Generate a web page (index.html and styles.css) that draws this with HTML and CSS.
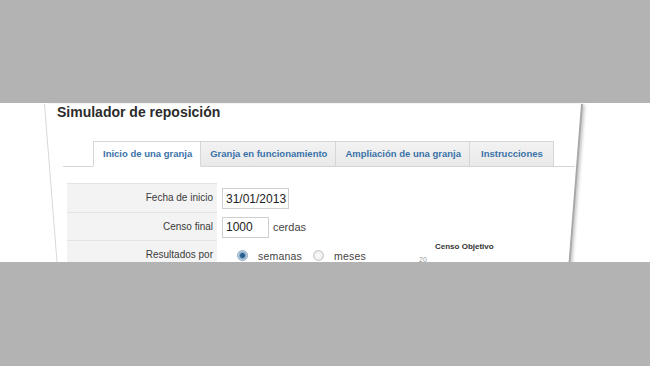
FILE: index.html
```html
<!DOCTYPE html>
<html lang="es">
<head>
    <meta charset="UTF-8">
    <meta name="viewport" content="width=device-width, initial-scale=1.0">
    <title>Simulador de reposición</title>
    <link rel="stylesheet" href="styles.css">
</head>
<body>
    <div class="band">
        <div class="sheet">
            <h1 class="title">Simulador de reposición</h1>

            <div class="tabs">
                <div class="tab active">Inicio de una granja</div>
                <div class="tab">Granja en funcionamiento</div>
                <div class="tab">Ampliación de una granja</div>
                <div class="tab last">Instrucciones</div>
            </div>

            <div class="form">
                <div class="fields">
                    <div class="label">Fecha de inicio</div>
                    <div class="value"><input class="field date" type="text" value="31/01/2013"></div>

                    <div class="label">Censo final</div>
                    <div class="value"><input class="field num" type="text" value="1000"><span class="unit">cerdas</span></div>

                    <div class="label">Resultados por</div>
                    <div class="value">
                        <span class="radio checked"></span><span class="opt">semanas</span>
                        <span class="radio"></span><span class="opt">meses</span>
                    </div>
                </div>

                <div class="chart">
                    <div class="chart-title">Censo Objetivo</div>
                    <div class="axis"><span class="tick">20</span><span class="grid-line"></span></div>
                </div>
            </div>
        </div>
    </div>
</body>
</html>
```

FILE: styles.css
```css
body {
    margin: 0;
    background: #b3b3b3;
    font-family: "Liberation Sans", Arial, sans-serif;
    color: #333;
}
.band {
    margin-top: 103px;
    height: 159px;
    background: #fff;
    overflow: hidden;
}
.sheet {
    position: relative;
    margin-left: 44px;
    width: 538px;
    height: 100%;
}
/* page edge, tilted back a little */
.sheet::before {
    content: "";
    position: absolute;
    top: 0;
    left: 0;
    width: 536px;
    height: 172px;
    border-left: 1px solid #d8d8d8;
    border-right: 2px solid #a9a9a9;
    box-shadow: 3px 0 3px -1px rgba(0,0,0,0.22);
    transform-origin: 50% 0;
    transform: perspective(600px) rotateX(-10deg);
}
.title {
    margin: 1px 0 0 13px;
    font-size: 14px;
    line-height: 17px;
    font-weight: bold;
    color: #2b2b2b;
}
.tabs {
    display: flex;
    margin: 20px 0 0 19px;
    width: 482px;
    padding-left: 30px;
    border-bottom: 1px solid #d6d6d6;
}
.tab {
    height: 24px;
    line-height: 24px;
    padding: 0 8px 0 9px;
    margin-bottom: -1px;
    border: 1px solid #d6d6d6;
    border-left: none;
    background: linear-gradient(#f2f2f2, #e9e9e9);
    color: #3a72a8;
    font-size: 9.5px;
    font-weight: bold;
}
.tab:first-child {
    border-left: 1px solid #d6d6d6;
}
.tab.last {
    padding: 0 10px 0 11px;
}
.tab.active {
    background: #fff;
    border-bottom-color: #fff;
}
.form {
    display: flex;
    margin: 16px 0 0 23px;
}
.fields {
    display: grid;
    grid-template-columns: 150px 150px;
    grid-auto-rows: 28.5px;
}
.label {
    background: #f3f3f3;
    border-top: 1px solid #e4e4e4;
    padding-right: 4px;
    text-align: right;
    font-size: 10px;
    line-height: 27px;
    color: #3a3a3a;
}
.value {
    display: flex;
    align-items: center;
    padding-left: 5px;
    font-size: 11px;
    color: #444;
}
.field {
    box-sizing: border-box;
    height: 21px;
    margin: 3px 0 0;
    padding: 0 0 0 3px;
    border: 1px solid #cfcfcf;
    font-family: inherit;
    font-size: 12px;
    color: #222;
}
.date { width: 67px; }
.num { width: 47px; }
.unit { margin-left: 4px; margin-top: 3px; }
.radio {
    box-sizing: border-box;
    width: 11px;
    height: 11px;
    margin: 3px 10px 0 15px;
    border: 1px solid #c4c4c4;
    border-radius: 50%;
    background: radial-gradient(#fdfdfd, #e3e3e3);
}
.radio + .opt + .radio { margin-left: 11px; }
.radio.checked {
    border-color: #8fa9c0;
    background: radial-gradient(#2a5f8f 0 2px, #7fa6c6 3px, #e6eef5 5px);
}
.opt {
    margin-top: 3px;
    font-size: 10.5px;
    letter-spacing: 0.2px;
}
.chart {
    margin: 59px 0 0 52px;
    width: 150px;
}
.chart-title {
    padding-left: 16px;
    font-size: 8px;
    line-height: 10px;
    font-weight: bold;
    color: #333;
}
.axis {
    display: flex;
    align-items: flex-end;
    margin-top: 3px;
}
.tick {
    width: 14px;
    font-size: 7px;
    line-height: 9px;
    color: #9a9a9a;
}
.grid-line {
    flex: 1;
    border-top: 1px solid #ddd;
    margin-bottom: 1px;
}
```
